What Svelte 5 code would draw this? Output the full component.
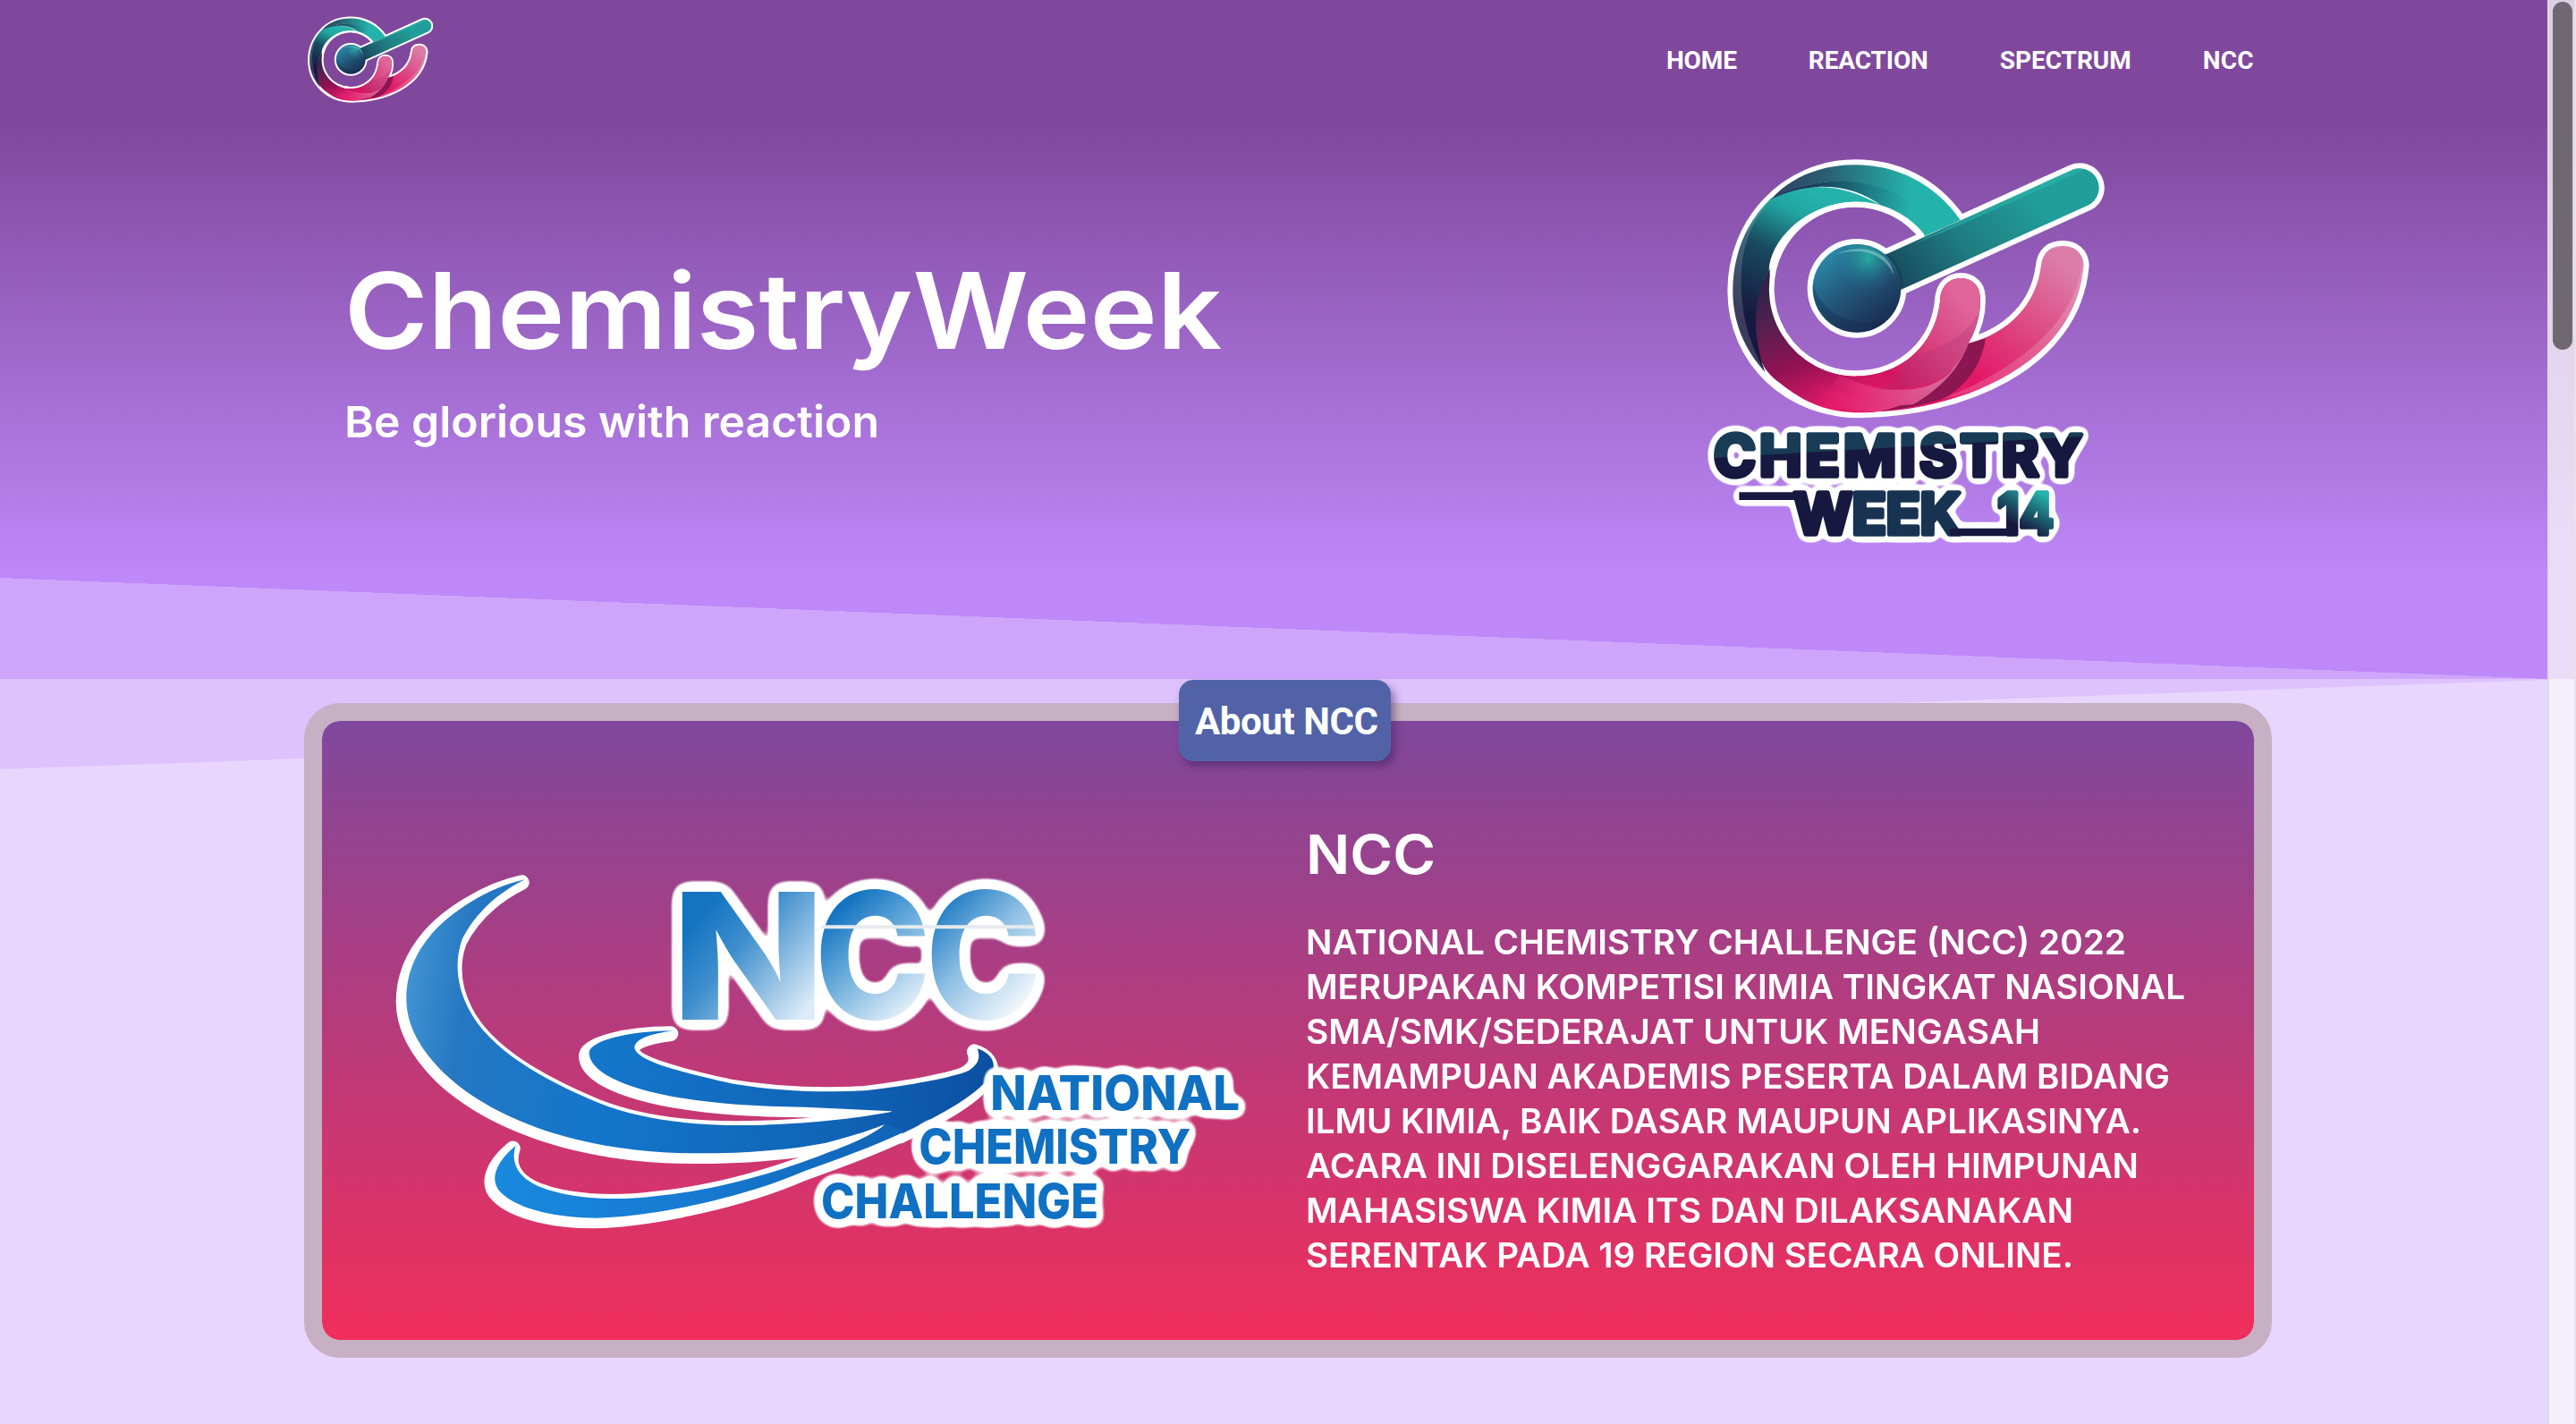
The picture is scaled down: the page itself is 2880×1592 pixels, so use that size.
<script>
  const nav = [
    { label: 'HOME', width: 79 },
    { label: 'REACTION', width: 134 },
    { label: 'SPECTRUM', width: 147 },
    { label: 'NCC', width: 57 }
  ];

  const about = [
    { text: 'NATIONAL CHEMISTRY CHALLENGE (NCC) 2022', width: 917 },
    { text: 'MERUPAKAN KOMPETISI KIMIA TINGKAT NASIONAL', width: 983 },
    { text: 'SMA/SMK/SEDERAJAT UNTUK MENGASAH', width: 821 },
    { text: 'KEMAMPUAN AKADEMIS PESERTA DALAM BIDANG', width: 966 },
    { text: 'ILMU KIMIA, BAIK DASAR MAUPUN APLIKASINYA.', width: 934 },
    { text: 'ACARA INI DISELENGGARAKAN OLEH HIMPUNAN', width: 931 },
    { text: 'MAHASISWA KIMIA ITS DAN DILAKSANAKAN', width: 858 },
    { text: 'SERENTAK PADA 19 REGION SECARA ONLINE.', width: 858 }
  ];

  // Tracks a single line of text out (or in) so that it fills the given measure.
  function track(node, width) {
    const natural = node.getBoundingClientRect().width;
    const gaps = node.textContent.length - 1;
    node.style.letterSpacing = (width - natural) / gaps + 'px';
  }

  function extend(node, width) {
    const natural = node.getBoundingClientRect().width;
    node.style.transform = `scaleX(${width / natural})`;
  }
</script>

{#snippet mark(id)}
  <defs>
    <linearGradient id="{id}-top" gradientUnits="userSpaceOnUse" x1="300" y1="180" x2="740" y2="200">
      <stop offset="0" stop-color="#2c4566" /><stop offset="0.35" stop-color="#2a5f72" /><stop offset="1" stop-color="#24b3ab" />
    </linearGradient>
    <linearGradient id="{id}-shade" gradientUnits="userSpaceOnUse" x1="300" y1="190" x2="740" y2="260">
      <stop offset="0" stop-color="#161b45" /><stop offset="0.5" stop-color="#1b6272" /><stop offset="1" stop-color="#24b3ab" />
    </linearGradient>
    <linearGradient id="{id}-left" gradientUnits="userSpaceOnUse" x1="420" y1="200" x2="220" y2="620">
      <stop offset="0" stop-color="#24b3ab" /><stop offset="0.18" stop-color="#22a5a0" /><stop offset="0.5" stop-color="#184a60" /><stop offset="1" stop-color="#17183f" />
    </linearGradient>
    <linearGradient id="{id}-bottom" gradientUnits="userSpaceOnUse" x1="270" y1="520" x2="420" y2="930">
      <stop offset="0" stop-color="#33224a" /><stop offset="0.25" stop-color="#54204f" /><stop offset="0.6" stop-color="#8e1253" /><stop offset="1" stop-color="#e41868" />
    </linearGradient>
    <linearGradient id="{id}-finger" gradientUnits="userSpaceOnUse" x1="560" y1="850" x2="920" y2="560">
      <stop offset="0" stop-color="#d4145f" stop-opacity="0" /><stop offset="0.25" stop-color="#d3155f" /><stop offset="0.6" stop-color="#d8407c" /><stop offset="1" stop-color="#e0659b" />
    </linearGradient>
    <linearGradient id="{id}-rim" gradientUnits="userSpaceOnUse" x1="420" y1="900" x2="850" y2="780">
      <stop offset="0" stop-color="#e41868" stop-opacity="0" /><stop offset="0.45" stop-color="#e3367a" /><stop offset="1" stop-color="#d66f9c" />
    </linearGradient>
    <linearGradient id="{id}-tail" gradientUnits="userSpaceOnUse" x1="960" y1="820" x2="1250" y2="430">
      <stop offset="0" stop-color="#e21766" /><stop offset="0.45" stop-color="#dd4580" /><stop offset="1" stop-color="#dc7da8" />
    </linearGradient>
    <linearGradient id="{id}-arm" gradientUnits="userSpaceOnUse" x1="700" y1="480" x2="1120" y2="160">
      <stop offset="0" stop-color="#194c60" /><stop offset="0.45" stop-color="#1f7c80" /><stop offset="1" stop-color="#219e9a" />
    </linearGradient>
    <linearGradient id="{id}-ball" gradientUnits="userSpaceOnUse" x1="470" y1="400" x2="640" y2="640">
      <stop offset="0" stop-color="#2b86a6" /><stop offset="0.45" stop-color="#22597c" /><stop offset="1" stop-color="#1b2c52" />
    </linearGradient>
    <radialGradient id="{id}-glow" gradientUnits="userSpaceOnUse" cx="595" cy="415" r="115">
      <stop offset="0" stop-color="#26b3a4" stop-opacity="0.9" /><stop offset="1" stop-color="#24648a" stop-opacity="0" />
    </radialGradient>
  </defs>
  <g fill="#fff" stroke="#fff" stroke-width="36" stroke-linejoin="round">
    <path d="M905 288C815 160 690 103 553 103C320 103 142 295 142 525C142 760 330 934 570 934C900 930 1290 780 1319 440C1318 400 1290 375 1248 375C1205 375 1180 400 1176 440C1160 570 1070 665 932 702C960 650 975 600 971 545C971 510 945 483 907 483C868 483 842 510 838 548C828 700 710 811 555 811A292 292 0 1 1 785 343Z" />
    <path d="M656 403L1275 122A64 64 0 0 1 1335 238L705 522Z" />
    <circle cx="558" cy="517" r="148" />
  </g>
  <path fill="url(#{id}-tail)" d="M640 930C900 915 1290 780 1319 440C1318 400 1290 375 1248 375C1205 375 1180 400 1176 440C1160 570 1070 665 932 702Z" />
  <path fill="#fff" opacity="0.17" d="M845 888C1090 790 1290 640 1316 425C1335 630 1150 830 845 888Z" />
  <path fill="#8b1652" d="M932 702L990 685C975 780 920 850 845 888C770 912 700 924 630 930C780 890 880 820 932 702Z" />
  <path fill="url(#{id}-bottom)" d="M971 545C971 510 945 483 907 483C868 483 842 510 838 548C828 700 710 811 555 811C400 811 262 690 266 450C215 530 200 640 225 720C240 780 255 800 300 835C380 900 460 934 570 934C600 934 620 932 632 930C800 890 880 820 932 702C960 650 975 600 971 545Z" />
  <path fill="url(#{id}-rim)" d="M215 645C380 850 600 930 750 905C840 850 900 790 932 702C880 820 800 890 632 930C500 940 340 890 250 795Z" />
  <path fill="url(#{id}-rim)" d="M500 808C650 880 800 870 870 800L932 702C880 820 800 890 632 930L420 905Z" />
  <path fill="url(#{id}-finger)" d="M971 545C971 510 945 483 907 483C868 483 842 510 838 548C828 700 710 811 555 811L490 806C600 870 740 870 845 820C890 780 915 745 932 702C960 650 975 600 971 545Z" />
  <path fill="#a93473" opacity="0.28" d="M740 746C830 725 920 680 966 600C960 650 950 675 932 702C915 745 890 780 845 820C780 850 700 862 630 857C700 830 700 790 740 746Z" />
  <path fill="url(#{id}-left)" d="M640 240C610 231 580 227 555 227C395 227 268 350 263 455C215 540 200 650 250 798C180 720 142 630 142 525C142 400 190 290 270 215C400 155 520 170 640 240Z" />
  <path fill="#fff" opacity="0.16" d="M270 218C160 340 160 480 180 610C195 690 225 750 250 798C180 720 142 630 142 525C142 400 190 290 270 218Z" />
  <path fill="url(#{id}-shade)" d="M270 218C340 170 540 130 640 175L905 288L785 343C740 290 700 258 640 240C540 165 400 155 270 218Z" />
  <path fill="url(#{id}-top)" d="M270 218C340 140 440 103 553 103C690 103 820 165 905 288L840 318C740 190 520 90 270 218Z" />
  <path fill="none" stroke="#fff" stroke-width="17" d="M779 343A284 284 0 1 0 555 803" />
  <path fill="url(#{id}-arm)" d="M640 410L1275 122A64 64 0 0 1 1335 238L705 522Z" />
  <path fill="#28b8ae" opacity="0.55" d="M910 290L1275 122C1290 115 1310 115 1320 120L900 307L740 372Z" />
  <path fill="#123a50" opacity="0.6" d="M655 400C690 420 712 460 714 512L704 519C706 470 690 435 650 406Z" />
  <circle cx="558" cy="517" r="148" fill="url(#{id}-ball)" />
  <circle cx="558" cy="517" r="148" fill="url(#{id}-glow)" />
  <path fill="#142b4d" opacity="0.35" d="M411 500C430 590 530 650 655 628A148 148 0 0 1 411 500Z" />
  <path fill="#bfeee6" opacity="0.4" d="M488 403C560 365 670 385 682 472C645 395 570 380 488 403Z" />
{/snippet}

<!-- White sticker outline with softly rounded corners. -->
{#snippet outline(id, spread)}
  <filter {id} filterUnits="userSpaceOnUse" x="-60" y="-60" width="3100" height="1560" color-interpolation-filters="sRGB">
    <feGaussianBlur in="SourceAlpha" stdDeviation={spread} />
    <feComponentTransfer result="edge">
      <feFuncR type="linear" slope="0" intercept="1" />
      <feFuncG type="linear" slope="0" intercept="1" />
      <feFuncB type="linear" slope="0" intercept="1" />
      <feFuncA type="linear" slope="24" intercept="-0.7" />
    </feComponentTransfer>
    <feMerge><feMergeNode in="edge" /><feMergeNode in="SourceGraphic" /></feMerge>
  </filter>
{/snippet}

<div class="screen">
  <div class="page">
    <header class="topbar">
      <svg class="brand" viewBox="123 85 1263 865" aria-label="Chemistry Week">{@render mark('small')}</svg>
      <nav>
        {#each nav as item}
          <a href="#top"><span use:track={item.width}>{item.label}</span></a>
        {/each}
      </nav>
    </header>

    <section class="hero">
      <div class="hero-copy">
        <h1><span use:extend={981}>ChemistryWeek</span></h1>
        <p><span use:extend={598}>Be glorious with reaction</span></p>
      </div>
      <svg class="hero-logo" viewBox="0 0 1500 1440" aria-label="Chemistry Week 14">
        <defs>
          {@render outline('word-edge', 12)}
          <linearGradient id="ink" gradientUnits="userSpaceOnUse" x1="0" y1="1000" x2="9" y2="1155">
            <stop offset="0.57" stop-color="#183b56" /><stop offset="0.59" stop-color="#17183f" />
          </linearGradient>
          <linearGradient id="ink-week" gradientUnits="userSpaceOnUse" x1="540" y1="1200" x2="600" y2="1200">
            <stop offset="0" stop-color="#17183f" /><stop offset="0.1" stop-color="#183352" />
          </linearGradient>
          <linearGradient id="ink-14" gradientUnits="userSpaceOnUse" x1="1170" y1="1200" x2="1100" y2="1320">
            <stop offset="0" stop-color="#24b3a8" /><stop offset="0.5" stop-color="#1b6070" /><stop offset="1" stop-color="#17183f" />
          </linearGradient>
        </defs>
        {@render mark('large')}
        <g class="wordmark" filter="url(#word-edge)">
          <text class="ink" x="78" y="1147" textLength="1236" lengthAdjust="spacing">CHEMISTRY</text>
          <text class="ink-week" x="346" y="1341" textLength="560" lengthAdjust="spacing">WEEK</text>
          <text class="ink-14" x="1030" y="1341" textLength="188" lengthAdjust="spacingAndGlyphs">14</text>
          <path class="bars" d="M163 1214H370M870 1335H1080" />
        </g>
      </svg>
    </section>

    <main>
      <svg class="slant" viewBox="0 0 2848 100" preserveAspectRatio="none" aria-hidden="true">
        <path d="M0 0H2848V1L0 100Z" />
      </svg>
      <article class="card">
        <div class="badge"><span use:track={205}>About NCC</span></div>
        <svg class="ncc-logo" viewBox="0 0 2940 1290" aria-label="National Chemistry Challenge">
          <defs>
            {@render outline('initial-edge', 22)}
            {@render outline('caption-edge', 20)}
            <linearGradient id="sweep" gradientUnits="userSpaceOnUse" x1="100" y1="450" x2="2060" y2="700">
              <stop offset="0" stop-color="#4193d3" /><stop offset="0.1" stop-color="#2577c2" /><stop offset="0.35" stop-color="#1376cb" /><stop offset="0.75" stop-color="#1064b6" /><stop offset="1" stop-color="#0b50a3" />
            </linearGradient>
            <linearGradient id="sweep-low" gradientUnits="userSpaceOnUse" x1="400" y1="1100" x2="1700" y2="900">
              <stop offset="0" stop-color="#1889de" /><stop offset="0.5" stop-color="#167ad0" /><stop offset="1" stop-color="#1065b8" />
            </linearGradient>
            <linearGradient id="n-fill" gradientUnits="userSpaceOnUse" x1="1080" y1="200" x2="1450" y2="500">
              <stop offset="0" stop-color="#1474c1" /><stop offset="0.35" stop-color="#3f8fcd" /><stop offset="1" stop-color="#dcebf8" />
            </linearGradient>
            <linearGradient id="c1-fill" gradientUnits="userSpaceOnUse" x1="1530" y1="190" x2="1800" y2="500">
              <stop offset="0" stop-color="#1474c1" /><stop offset="0.4" stop-color="#62a7d9" /><stop offset="1" stop-color="#e3f0fa" />
            </linearGradient>
            <linearGradient id="c2-fill" gradientUnits="userSpaceOnUse" x1="1880" y1="200" x2="2170" y2="480">
              <stop offset="0" stop-color="#2a82c8" /><stop offset="0.45" stop-color="#8fc0e4" /><stop offset="1" stop-color="#f0f6fb" />
            </linearGradient>
          </defs>
          {#snippet sweeps()}
            <path d="M500 70C380 95 250 180 190 250C130 320 103 390 103 470C103 560 150 640 230 720C400 880 700 988 1080 988C1250 988 1400 975 1510 953C1600 930 1660 910 1710 890L1740 847C1600 875 1420 890 1300 893C1100 900 900 880 750 820C560 740 380 640 310 500C270 420 265 340 290 270C330 190 400 120 500 70Z" />
            <path d="M1000 577C850 578 720 610 716 650C716 740 950 830 1440 833L1730 847L1690 920L1770 920C1850 880 2040 790 2070 710C2080 680 2060 650 2018 637C2030 670 2020 690 1990 710C1950 730 1800 760 1640 778C1500 785 1350 780 1200 755C950 700 880 670 868 635C870 610 900 590 1000 577Z" />
            <path class="low" d="M470 962C400 1020 380 1080 420 1120C480 1180 620 1205 740 1205C950 1200 1250 1130 1440 1047C1560 1005 1680 960 1775 915L1710 890C1660 930 1600 955 1500 992C1350 1050 1150 1110 950 1130C800 1150 650 1140 550 1100C480 1070 450 1020 470 962Z" />
          {/snippet}
          <g class="sweep-halo">{@render sweeps()}</g>
          <g class="sweep">{@render sweeps()}</g>
          <g class="initials" filter="url(#initial-edge)">
            <text class="n" x="990" y="541" textLength="520" lengthAdjust="spacingAndGlyphs">N</text>
            <text class="c1" x="1472" y="538" textLength="390" lengthAdjust="spacingAndGlyphs">C</text>
            <text class="c2" x="1844" y="538" textLength="390" lengthAdjust="spacingAndGlyphs">C</text>
            <path class="cut" d="M1496 229H2212" />
          </g>
          <g class="caption" filter="url(#caption-edge)">
            <text x="2062" y="844" textLength="836" lengthAdjust="spacingAndGlyphs">NATIONAL</text>
            <text x="1822" y="1022" textLength="912" lengthAdjust="spacingAndGlyphs">CHEMISTRY</text>
            <text x="1494" y="1206" textLength="930" lengthAdjust="spacingAndGlyphs">CHALLENGE</text>
          </g>
        </svg>
        <div class="card-copy">
          <h2><span use:extend={145}>NCC</span></h2>
          <p>
            {#each about as line}
              <span class="line"><span use:extend={line.width}>{line.text}</span></span>
            {/each}
          </p>
        </div>
      </article>
    </main>
  </div>

  <div class="scrollbar"><div class="thumb"></div></div>
</div>

<style>
  :global(body) {
    margin: 0;
    overflow: hidden;
  }
  .screen {
    display: flex;
    width: 2880px;
    height: 1592px;
    overflow: hidden;
    color: #fff;
    font-family: Inter, 'Noto Sans', sans-serif;
  }
  .page {
    width: 2848px;
    background: #e8d6fe;
  }
  span {
    display: inline-block;
    transform-origin: left center;
    white-space: nowrap;
  }
  .topbar {
    display: flex;
    align-items: center;
    justify-content: space-between;
    height: 134px;
    padding: 0 328px 0 344px;
    box-sizing: border-box;
    background: #7f489c;
  }
  .brand {
    width: 140px;
    height: 97px;
    margin-bottom: 2px;
  }
  nav {
    display: flex;
    gap: 80px;
  }
  nav a {
    padding-top: 1px;
    color: #fff;
    font: 700 28px/134px Roboto, sans-serif;
    text-decoration: none;
  }
  .hero {
    display: flex;
    align-items: flex-start;
    height: 625px;
    box-sizing: border-box;
    padding: 16px 458px 0 385px;
    justify-content: space-between;
    background:
      linear-gradient(to bottom left, transparent 49.95%, #cea5fb 50.05%) 0 512px / 100% 113px no-repeat,
      linear-gradient(#7f489c, #be88f9 512px);
  }
  .hero-copy {
    padding-top: 132px;
  }
  h1, h2, p {
    margin: 0;
  }
  h1 {
    font-size: 118px;
    line-height: 130px;
    font-weight: 600;
  }
  .hero-copy p {
    margin-top: 30px;
    font-size: 48.5px;
    line-height: 60px;
    font-weight: 600;
  }
  .hero-logo {
    width: 500px;
    height: 480px;
  }
  .wordmark text {
    font: 700 190px Inter, sans-serif;
    stroke-width: 17px;
    stroke-linejoin: round;
  }
  .wordmark path {
    fill: none;
    stroke-width: 26px;
  }
  .wordmark .bars { stroke: #17183f; }
  .ink { fill: url(#ink); stroke: url(#ink); }
  .ink-week { fill: url(#ink-week); stroke: url(#ink-week); }
  .ink-14 { fill: url(#ink-14); stroke: url(#ink-14); }
  main {
    display: grid;
    padding: 0 308px 0 340px;
  }
  .slant {
    grid-area: 1 / 1;
    width: 2848px;
    height: 101px;
    margin-left: -340px;
    fill: #ddc2fd;
  }
  .card {
    grid-area: 1 / 1;
    position: relative;
    display: flex;
    width: 2200px;
    height: 732px;
    margin-top: 27px;
    box-sizing: border-box;
    border: 20px solid #c7b0c4;
    border-radius: 40px;
    background: linear-gradient(#7f489c, #f02e5b) padding-box;
  }
  .badge {
    position: absolute;
    left: 958px;
    top: -46px;
    width: 237px;
    height: 91px;
    box-sizing: border-box;
    padding-left: 17px;
    border: 1px solid #5068b0;
    border-radius: 16px;
    background: #5162a7;
    box-shadow: 4px 6px 10px rgba(60, 30, 90, 0.5);
    font: 700 42px/91px Roboto, sans-serif;
  }
  .ncc-logo {
    width: 980px;
    height: 430px;
    margin: 154px 60px 0;
    overflow: visible;
  }
  .sweep-halo {
    fill: #fff;
    stroke: #fff;
    stroke-width: 50px;
    stroke-linejoin: round;
    transform: translate(-10px, 10px);
  }
  .sweep { fill: url(#sweep); }
  .sweep .low { fill: url(#sweep-low); }
  .initials text { font: 800 590px Inter, sans-serif; }
  .initials .n { fill: url(#n-fill); }
  .initials .c1 { fill: url(#c1-fill); }
  .initials .c2 { fill: url(#c2-fill); }
  .cut {
    stroke: #e6eaee;
    stroke-width: 12px;
  }
  .caption text {
    font: 800 162px Inter, sans-serif;
    fill: #1070c2;
  }
  .card-copy {
    padding-top: 109px;
  }
  h2 {
    font-size: 61px;
    line-height: 80px;
    font-weight: 600;
  }
  .card-copy p {
    margin-top: 33px;
    font-size: 38.5px;
    line-height: 50px;
    font-weight: 600;
  }
  .line {
    display: block;
    height: 50px;
  }
  .scrollbar {
    width: 32px;
    height: 1592px;
    box-sizing: border-box;
    padding: 2px 2px 0 4px;
    border-left: 2px solid #dddbe0;
    border-right: 2px solid #e6e3e9;
    background: linear-gradient(#dccfe2 0, #dccfe2 134px, #ebdcf8 640px, #ebdcf8 759px, #f5effc 759px);
  }
  .thumb {
    width: 22px;
    height: 389px;
    border-radius: 11px;
    background: #6e6971;
  }
</style>
